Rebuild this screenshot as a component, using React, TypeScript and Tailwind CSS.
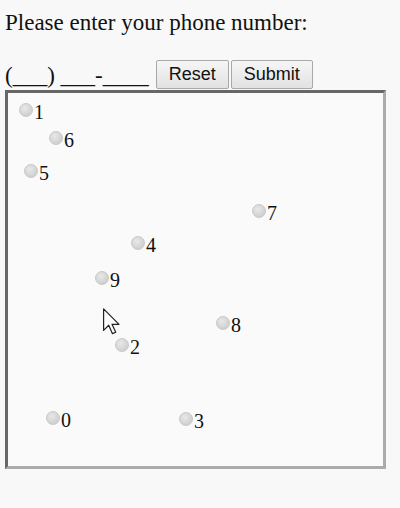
import React from "react";

const radios = [
  { n: "1", x: 19, y: 103 },
  { n: "6", x: 49, y: 131 },
  { n: "5", x: 24, y: 164 },
  { n: "7", x: 252, y: 204 },
  { n: "4", x: 131, y: 236 },
  { n: "9", x: 95, y: 271 },
  { n: "8", x: 216, y: 316 },
  { n: "2", x: 115, y: 338 },
  { n: "0", x: 46, y: 411 },
  { n: "3", x: 179, y: 412 },
];

function Radio({ n, x, y }: { n: string; x: number; y: number }) {
  return (
    <div
      className="absolute flex items-start"
      style={{ left: x - 8, top: y - 93 }}
    >
      <span className="block w-[14px] h-[14px] rounded-full bg-[radial-gradient(circle_at_40%_35%,#e8e8e8,#c6c6c6)] border border-[#c9c9c9]" />
      <span className="ml-[1px] text-[20px] leading-none text-[#111] mt-[-1px]">{n}</span>
    </div>
  );
}

export default function App() {
  return (
    <div className="w-[400px] h-[508px] bg-[#f8f8f8] text-[#111] font-['Liberation_Serif',serif] pl-[5px] pt-[10px]">
      <p className="text-[23px] leading-[26px]">Please enter your phone number:</p>
      <div className="mt-[24px] flex items-end h-[29px]">
        <span className="text-[23px] leading-[26px] mr-[7px]">(___) ___-____</span>
        <button className="h-[29px] w-[73px] font-['Liberation_Sans',sans-serif] text-[18px] text-[#111] bg-[linear-gradient(#f6f6f6,#e2e2e2)] border border-[#a8a8a8] rounded-[2px]">
          Reset
        </button>
        <button className="ml-[2px] h-[29px] w-[82px] font-['Liberation_Sans',sans-serif] text-[18px] text-[#111] bg-[linear-gradient(#f6f6f6,#e2e2e2)] border border-[#a8a8a8] rounded-[2px]">
          Submit
        </button>
      </div>
      <div className="relative mt-[1px] w-[381px] h-[379px] border-[3px] border-t-[#676767] border-l-[#676767] border-b-[#ababab] border-r-[#ababab] bg-[#fafafa]">
        {radios.map((r) => (
          <Radio key={r.n} {...r} />
        ))}
        <svg
          className="absolute"
          style={{ left: 94, top: 215 }}
          width="20"
          height="28"
          viewBox="0 0 20 30"
        >
          <path
            d="M1 1 L1 24 L6.5 18.5 L10.5 27.5 L14 26 L10 17.5 L17.5 17.5 Z"
            fill="#fff"
            stroke="#222"
            strokeWidth="1.3"
            strokeLinejoin="round"
          />
        </svg>
      </div>
    </div>
  );
}
